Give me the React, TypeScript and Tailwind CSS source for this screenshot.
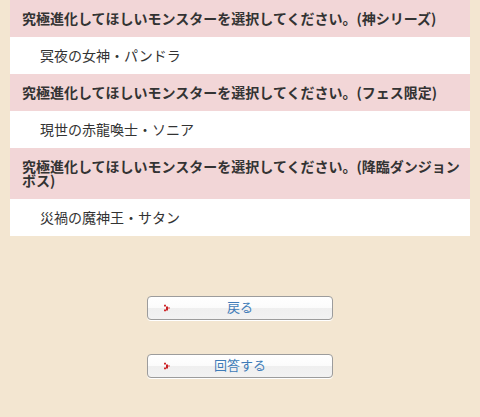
import React from 'react';

const groups = [
  { title: '究極進化してほしいモンスターを選択してください。(神シリーズ)', name: '冥夜の女神・パンドラ' },
  { title: '究極進化してほしいモンスターを選択してください。(フェス限定)', name: '現世の赤龍喚士・ソニア' },
  { title: '究極進化してほしいモンスターを選択してください。(降臨ダンジョンボス)', name: '災禍の魔神王・サタン' },
];

function Arrow() {
  return (
    <svg width="6" height="7" viewBox="0 0 6 7" className="absolute left-[16px] top-1/2 -translate-y-1/2">
      <rect x="0" y="0" width="2" height="2" fill="#d0282a" />
      <rect x="2" y="2" width="2" height="2" fill="#c81e22" />
      <rect x="4" y="3" width="2" height="1" fill="#e05050" />
      <rect x="0" y="5" width="2" height="2" fill="#d0282a" />
      <rect x="2" y="3" width="2" height="3" fill="#c81e22" />
    </svg>
  );
}

function Btn({ label }: { label: string }) {
  return (
    <button className="relative w-[186px] h-[24px] rounded-[4px] border border-[#9c9c9c] bg-[linear-gradient(#ffffff_0%,#fbfbfb_50%,#efefef_51%,#f2f2f2_100%)] text-[13px] leading-none text-[#3f7cb8] shadow-[0_1px_0_#fff]">
      <Arrow />
      <span className="relative top-[-2px]">{label}</span>
    </button>
  );
}

export default function App() {
  return (
    <div className="min-h-[417px] bg-[#f3e6d1] px-[10px] text-[#333] font-['Noto_Sans_CJK_JP','Noto_Sans',sans-serif]">
      <div className="bg-white">
        {groups.map((g, i) => (
          <div key={i}>
            <div className="bg-[#f2d6d7] pl-[12px] pr-[8px] pt-[11px] pb-[12px] text-[14px] leading-[14px] font-bold">{g.title}</div>
            <div className="h-[37px] flex items-center pl-[30px] text-[14px]">{g.name}</div>
          </div>
        ))}
      </div>
      <div className="flex flex-col items-center gap-[34px] pt-[60px] pb-[40px]">
        <Btn label="戻る" />
        <Btn label="回答する" />
      </div>
    </div>
  );
}
